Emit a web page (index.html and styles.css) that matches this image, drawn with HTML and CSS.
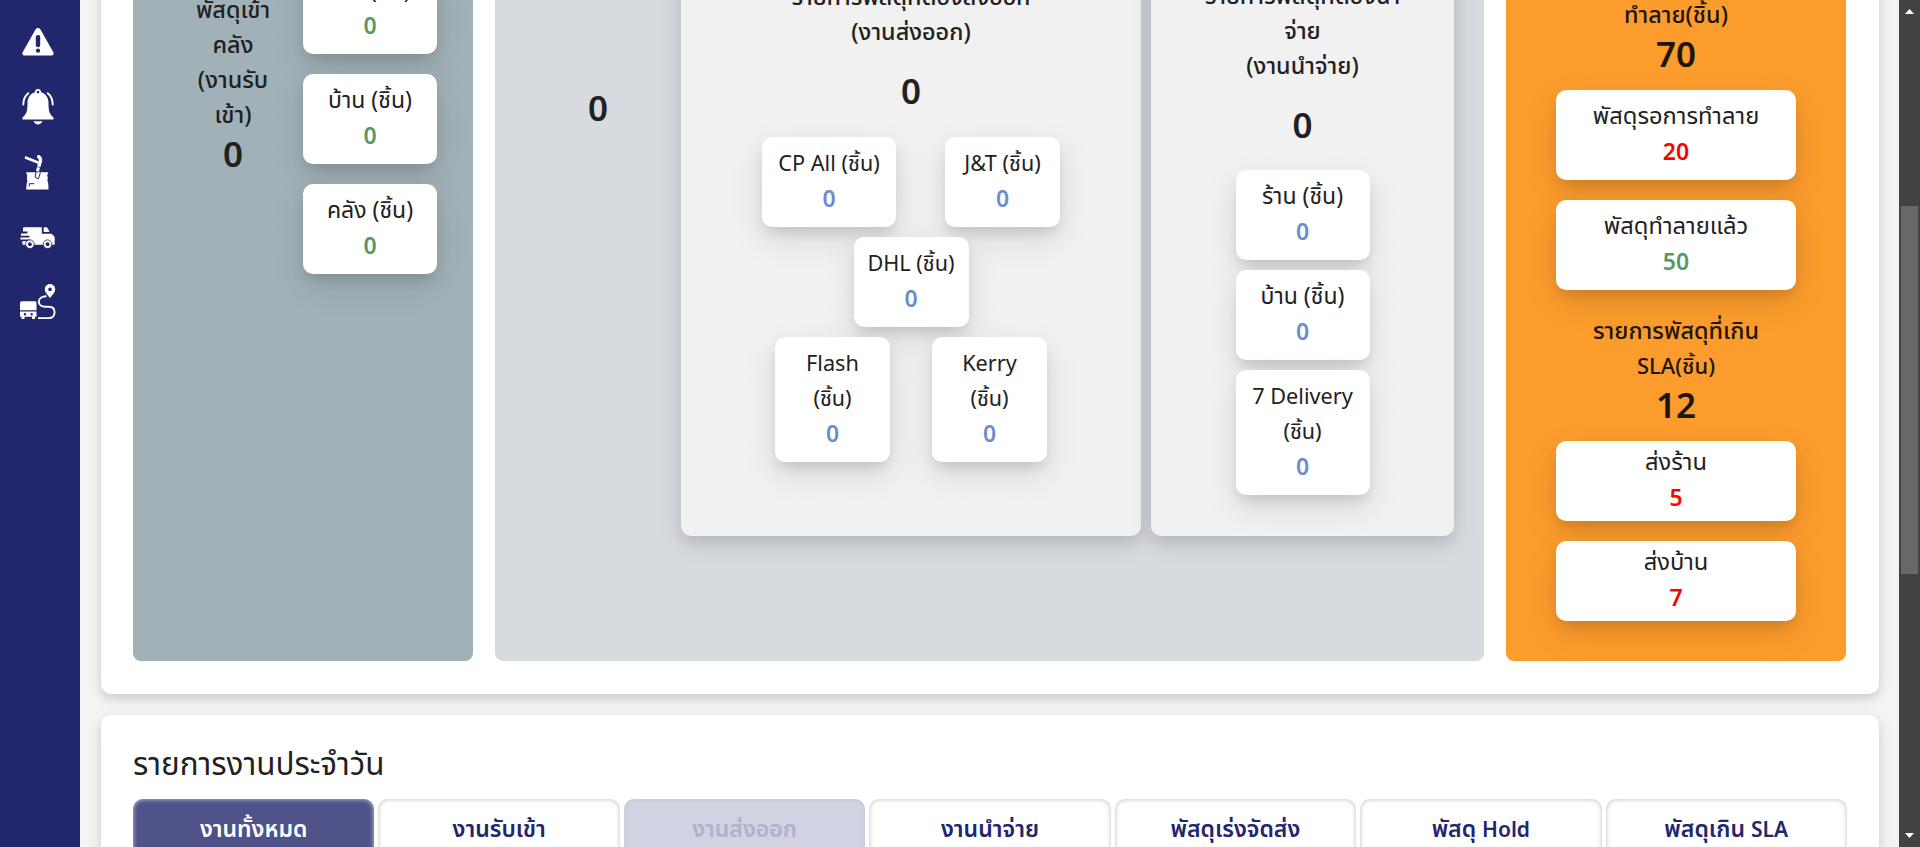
FILE: index.html
```html
<!DOCTYPE html>
<html lang="th">
<head>
<meta charset="utf-8">
<title>รายการงานประจำวัน</title>
<link rel="stylesheet" href="styles.css">
</head>
<body>
<div class="app">
  <nav class="sidebar">
    <svg class="ic ic-warn" width="32" height="28" viewBox="0 0 32 28"><path fill="#fff" fill-rule="evenodd" d="M16 0c1.100 0 1.900.6 2.500 1.500L31.200 24c1 1.800 0 3.500-2 3.500H2.800c-2 0-3-1.700-2-3.500L13.500 1.500C14.100.6 14.900 0 16 0zm0 7c-1.500 0-2.200.9-2.200 2.300v7.400c0 1.400.7 2.300 2.200 2.300s2.200-.9 2.200-2.300V9.300C18.200 7.900 17.500 7 16 7zm0 13.600a2.100 2.100 0 1 0 0 4.200 2.100 2.100 0 0 0 0-4.200z"/></svg>
    <svg class="ic ic-bell" width="32" height="36" viewBox="0 0 32 36"><g fill="#fff"><path fill-rule="evenodd" d="M16 0c2 0 3.200 1.500 3.100 3.300 4.800 1.500 7.400 5.400 7.400 10.700 0 8.500 1 11 5 14.500V30.500H.5V28.500c4-3.500 5-6 5-14.500 0-5.300 2.600-9.200 7.400-10.700C12.800 1.500 14 0 16 0zm0 1.800a1.300 1.300 0 1 0 0 2.600 1.300 1.300 0 0 0 0-2.600z"/><path d="M11.500 32.200h9c-.8 2-2.500 3.200-4.500 3.200s-3.700-1.200-4.500-3.200z"/></g><path d="M6.300 4.200C3 6.800 1.300 10.500 1.300 15.500M25.700 4.200c3.300 2.600 5 6.300 5 11.300" fill="none" stroke="#fff" stroke-width="1.900" stroke-linecap="round"/></svg>
    <svg class="ic ic-box" width="26" height="36" viewBox="0 0 26 36"><g fill="none" stroke="#fff"><path stroke-width="2.600" stroke-linecap="round" d="M2 2.700 13.500 7.300"/><path stroke-width="3.400" d="M13.300 1c2.600.8 3.700 2.700 3 5.500l-1.600 5.300"/><path stroke-width="3" d="m14.500 12.300-1.100 4"/></g><path fill="#fff" d="M2 17.300h22.500c-1.800 2.500-1.400 4-.6 5.200-.8 2.300-.4 4 .4 5.800l.2 6.200H2.200l.4-5.700c.9-1.600.9-3 .2-4.800.6-2.200.6-4-.8-6.700z"/><path d="m12 17-.8 5.300 3.200 1.500 2-6.300M5.300 31.300V28.700h5" fill="none" stroke="#22266d" stroke-width="1"/></svg>
    <svg class="ic ic-truck" width="35" height="22" viewBox="0 0 35 22"><path fill="#fff" d="M3 1.300C3 .6 3.600.2 4.300.2h17.500v6.600h9.600l2.300 2c.7.600 1 1.300 1 2.200v6.700H3.500c-.8 0-1.200-.5-1.200-1.300v-2.200h8V12.500H.4v-2h9V8.800H1V6.600h6.500V4.500H3zM23.700.2h1.900c1.200 0 1.900.6 2.400 1.500L29.500 5h-5.800z"/><g fill="#fff" stroke="#22266d" stroke-width=".8"><circle cx="9.900" cy="17.200" r="4.300"/><circle cx="27.600" cy="17.200" r="4.300"/></g><g fill="#22266d"><circle cx="9.900" cy="17.200" r="1.900"/><circle cx="27.600" cy="17.200" r="1.900"/></g></svg>
    <svg class="ic ic-route" width="36" height="36" viewBox="0 0 36 36"><path fill="#fff" fill-rule="evenodd" d="M30 0c3 0 5.200 2.300 5.200 5.200 0 3.300-3 5.600-5.200 8.800-2.200-3.200-5.200-5.500-5.200-8.800C24.800 2.300 27 0 30 0zm0 3.600a1.800 1.800 0 1 0 0 3.600 1.800 1.800 0 0 0 0-3.600z"/><path fill="none" stroke="#fff" stroke-width="1.900" d="M26.500 12.300c-4.500 0-7.700 2.300-7.700 5.500s3 5 6.500 5h3.500c3.500 0 5.800 2 5.800 5.500s-2.300 5.800-5.800 5.800H18"/><path fill="#fff" fill-rule="evenodd" d="M2 17.300h13c.9 0 1.500.6 1.500 1.500v7.400H0v-6.900c0-1.200.8-2 2-2zM0 27.500h16.500v5.300H15V35h-3v-2.200H4.500V35h-3v-2.200H0zm5 1.500a1.200 1.200 0 1 0 0 2.400A1.200 1.200 0 0 0 5 29zm6.700 0a1.200 1.200 0 1 0 0 2.400 1.200 1.200 0 0 0 0-2.400z"/></svg>
  </nav>

  <main class="content">
    <section class="card overview">
      <div class="panel inbound">
        <div class="heading">
          <p>พัสดุเข้า</p><p>คลัง</p><p>(งานรับ</p><p>เข้า)</p>
          <strong class="total">0</strong>
        </div>
        <div class="stack">
          <div class="tile green"><p>ร้าน (ชิ้น)</p><b>0</b></div>
          <div class="tile green"><p>บ้าน (ชิ้น)</p><b>0</b></div>
          <div class="tile green"><p>คลัง (ชิ้น)</p><b>0</b></div>
        </div>
      </div>

      <div class="panel stock">
        <strong class="total stock-total">0</strong>
        <div class="sub export">
          <p>รายการพัสดุที่ต้องส่งออก</p><p>(งานส่งออก)</p>
          <strong class="total">0</strong>
          <div class="row row-a">
            <div class="tile blue mixed"><p>CP All (ชิ้น)</p><b>0</b></div>
            <div class="tile blue mixed narrow"><p>J&amp;T (ชิ้น)</p><b>0</b></div>
          </div>
          <div class="row"><div class="tile blue mixed narrow"><p>DHL (ชิ้น)</p><b>0</b></div></div>
          <div class="row row-c">
            <div class="tile blue mixed narrow"><p>Flash</p><p>(ชิ้น)</p><b>0</b></div>
            <div class="tile blue mixed narrow"><p>Kerry</p><p>(ชิ้น)</p><b>0</b></div>
          </div>
        </div>
        <div class="sub deliver">
          <p>รายการพัสดุที่ต้องนำ</p><p>จ่าย</p><p>(งานนำจ่าย)</p>
          <strong class="total">0</strong>
          <div class="tile blue"><p>ร้าน (ชิ้น)</p><b>0</b></div>
          <div class="tile blue"><p>บ้าน (ชิ้น)</p><b>0</b></div>
          <div class="tile blue mixed"><p>7 Delivery</p><p>(ชิ้น)</p><b>0</b></div>
        </div>
      </div>

      <div class="panel alert">
        <p>ทำลาย(ชิ้น)</p>
        <strong class="total">70</strong>
        <div class="tile red"><p>พัสดุรอการทำลาย</p><b>20</b></div>
        <div class="tile green"><p>พัสดุทำลายแล้ว</p><b>50</b></div>
        <p class="sla">รายการพัสดุที่เกิน</p><p class="latin">SLA(ชิ้น)</p>
        <strong class="total">12</strong>
        <div class="tile red short"><p>ส่งร้าน</p><b>5</b></div>
        <div class="tile red short"><p>ส่งบ้าน</p><b>7</b></div>
      </div>
    </section>

    <section class="card daily">
      <h2>รายการงานประจำวัน</h2>
      <div class="tabs">
        <button class="tab active">งานทั้งหมด</button>
        <button class="tab">งานรับเข้า</button>
        <button class="tab disabled">งานส่งออก</button>
        <button class="tab">งานนำจ่าย</button>
        <button class="tab">พัสดุเร่งจัดส่ง</button>
        <button class="tab">พัสดุ <span class="en">Hold</span></button>
        <button class="tab">พัสดุเกิน <span class="en">SLA</span></button>
      </div>
    </section>
  </main>

  <div class="scrollbar">
    <svg width="9" height="5" viewBox="0 0 9 5"><path fill="#fff" d="M4.500 0 9 5H0z"/></svg>
    <div class="thumb"></div>
    <svg width="9" height="5" viewBox="0 0 9 5"><path fill="#fff" d="M0 0h9L4.500 5z"/></svg>
  </div>
</div>
</body>
</html>
```
FILE: styles.css
```css
* { box-sizing: border-box; }
body {
  margin: 0;
  height: 847px;
  overflow: hidden;
  font-family: "Noto Sans", "Noto Sans Thai", sans-serif;
  font-size: 22px;
  color: #212121;
}
p, h2 { margin: 0; }
.app { display: flex; height: 847px; }

.sidebar {
  flex: none;
  width: 80px;
  background: #22266d;
  display: flex;
  flex-direction: column;
  align-items: flex-start;
}
.ic { display: block; flex: none; }
.ic-warn { margin: 28px 0 0 22px; }
.ic-bell { margin: 33px 0 0 22px; }
.ic-box { margin: 30px 0 0 24px; }
.ic-truck { margin: 36px 0 0 20px; }
.ic-route { margin: 35px 0 0 20px; }

.content {
  flex: 1;
  height: 847px;
  overflow: hidden;
  background: #f4f4f4;
  padding: 0 20px 0 21px;
}
.card {
  background: #fff;
  border-radius: 10px;
  box-shadow: 0 5px 10px rgba(0, 0, 0, .12), 0 3px 20px rgba(0, 0, 0, .06);
}
.overview {
  display: flex;
  gap: 22px;
  height: 734px;
  margin-top: -40px;
  padding: 0 32px 33px;
}
.panel { border-radius: 8px; overflow: hidden; }
.panel p, .panel b { display: block; line-height: 35px; white-space: nowrap; text-align: center; }
.total { display: block; font-size: 35px; font-weight: 600; line-height: 50px; text-align: center; }
.panel > p, .heading p, .sub > p { font-weight: 500; font-size: 23.4px; }
.panel > .latin { font-size: 22px; }

.inbound { width: 340px; background: #a0b1b7; display: flex; }
.heading { width: 134px; margin-left: 33px; padding-top: 32px; }
.heading .total { margin-top: -3px; }
.stack { margin-left: 3px; padding-top: 4px; display: flex; flex-direction: column; gap: 20px; }

.tile {
  width: 134px;
  height: 90px;
  padding: 8px 0;
  border-radius: 10px;
  background: #fff;
  box-shadow: 0 8px 14px -3px rgba(0, 0, 0, .13), 0 12px 34px rgba(0, 0, 0, .1);
}
.tile p { font-size: 23px; }
.panel .tile b { font-weight: 600; font-size: 23px; line-height: 37px; }
.tile:has(p + p) { height: 125px; }
.mixed p { font-size: 21.700px; }
.narrow { width: 115px; }
.green b { color: #559a62; }
.blue b { color: #6c8dcb; }
.red b { color: #f00; }

.stock { width: 989px; background: #d7dadf; display: flex; align-items: flex-start; }
.stock-total { width: 186px; padding: 123px 0 0 20px; }
.sub {
  height: 576px;
  background: #f1f1f1;
  border-radius: 10px;
  padding-top: 18px;
  box-shadow: 0 8px 14px rgba(0, 0, 0, .1), 0 6px 30px rgba(0, 0, 0, .08);
}
.export { width: 460px; padding-top: 19px; }
.export > .total { margin: 17px 0 21px; }
.row { display: flex; justify-content: center; margin-bottom: 10px; }
.row-a { gap: 49px; }
.row-c { gap: 42px; }
.deliver { width: 303px; margin-left: 10px; display: flex; flex-direction: column; align-items: center; }
.deliver > .total { margin: 17px 0 20px; }
.deliver > .tile { margin-bottom: 10px; }

.alert { width: 340px; background: #fc9c2d; color: #211507; padding-top: 37px; display: flex; flex-direction: column; align-items: center; }
.alert .total { margin: -3px 0 11px; }
.alert .tile { width: 240px; margin-bottom: 20px; color: #212121; }
.alert .tile p { font-size: 23.700px; }
.alert .short { height: 80px; padding: 3px 0; }
.alert .sla { margin-top: 3px; }
.alert .latin + .total { margin-bottom: 11px; }

.daily { height: 200px; margin-top: 21px; padding: 26px 32px 0; }
.daily h2 { font-size: 31.400px; font-weight: 400; line-height: 44px; white-space: nowrap; }
.tabs { display: flex; gap: 4px; margin-top: 14px; }
.tab {
  flex: 1 1 0;
  height: 62px;
  padding: 0 0 4px;
  border: 0;
  border-radius: 10px;
  background: #fff;
  color: #22266d;
  font: 600 23px/58px "Noto Sans", "Noto Sans Thai", sans-serif;
  box-shadow: inset 0 0 5px rgba(0, 0, 0, .28);
}
.en { font-size: 21px; }
.active { background: #4e5289; color: #fff; box-shadow: inset 0 0 5px #d0d1de; }
.disabled { background: #d1d2e2; color: #b0b0cf; box-shadow: inset 0 0 5px #c2c3d0; }

.scrollbar {
  flex: none;
  width: 21px;
  background: #424242;
  display: flex;
  flex-direction: column;
  align-items: center;
  padding: 9px 0;
}
.thumb { width: 17px; height: 368px; margin: 192px 0 259px; background: #686868; }
```
